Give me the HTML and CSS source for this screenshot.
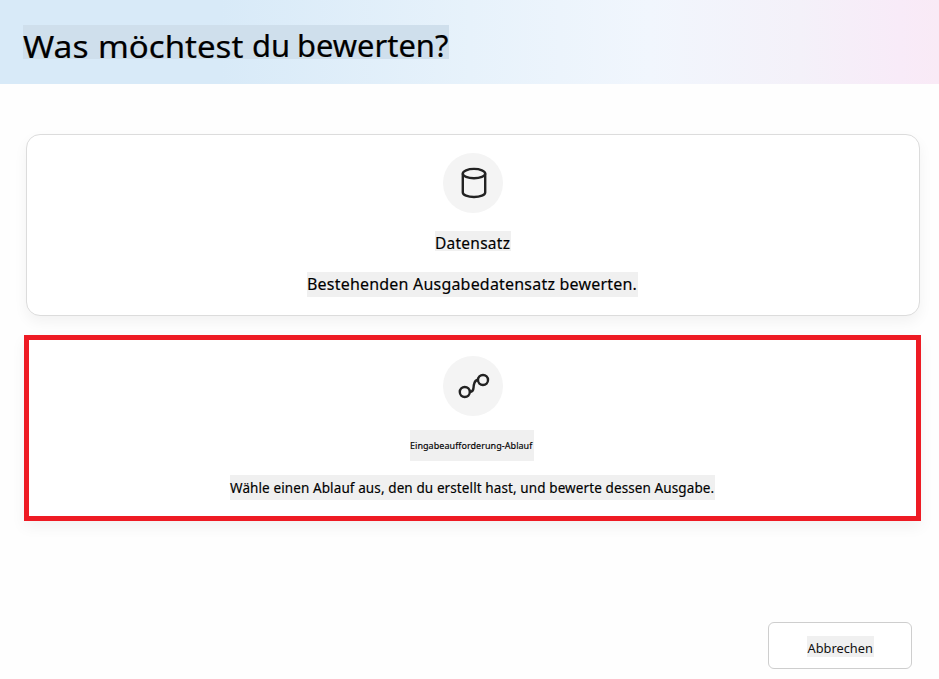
FILE: index.html
```html
<!DOCTYPE html>
<html lang="de">
<head>
<meta charset="utf-8">
<title>Was möchtest du bewerten?</title>
<link rel="stylesheet" href="styles.css">
</head>
<body>
<header class="header"><h1 class="title"><span class="wide">Was</span> <span class="medium">möchtest</span> <span class="tight">du</span> <span class="tight">bewerten?</span></h1></header>
<main class="options">
  <section class="card">
    <div class="icon">
      <svg width="60" height="60" viewBox="0 0 60 60"><ellipse cx="31" cy="20.6" rx="11.2" ry="4.7"/><path d="M19.8 20.6V39.4C19.8 42 24.8 44 31 44s11.2-2 11.2-4.6V20.6"/></svg>
    </div>
    <h2 class="label name">Datensatz</h2>
    <p class="label description">Bestehenden Ausgabedatensatz bewerten.</p>
  </section>
  <section class="card selected">
    <div class="icon">
      <svg width="60" height="60" viewBox="0 0 60 60"><circle cx="21.8" cy="36" r="5"/><circle cx="40" cy="24" r="5"/><path d="M26.8 36C31.8 36 30 31 31 28.5 31.5 26 32 24 35 24"/></svg>
    </div>
    <h2 class="label flow-name">Eingabeaufforderung-Ablauf</h2>
    <p class="label flow-description">Wähle einen Ablauf aus, den du erstellt hast, und bewerte dessen Ausgabe.</p>
  </section>
</main>
<footer class="footer"><button class="cancel"><span class="label cancel-text">Abbrechen</span></button></footer>
</body>
</html>
```
FILE: styles.css
```css
* { box-sizing: border-box; }
body {
  margin: 0;
  height: 679px;
  overflow: hidden;
  display: flex;
  flex-direction: column;
  background: #fefefe;
  color: #000;
  font-family: "Noto Sans", sans-serif;
}
.header {
  height: 84px;
  padding: 25px 23px;
  background: linear-gradient(90deg, #d8eaf8 0, #d8eaf8 220px, #e7f2fb 470px, #f1f6fd 650px, #f4f1f9 800px, #f8ebf8 900px, #f9eaf6 100%);
}
.title {
  margin: 0;
  width: 426px;
  height: 34px;
  display: grid;
  grid-template-columns: 74.5px 154px 45px 1fr;
  background: #cfdfec;
  font-size: 30px;
  font-weight: 400;
  line-height: 42px;
  white-space: nowrap;
  -webkit-text-stroke: .2px #000;
}
.title span { transform-origin: left; }
.wide { transform: translateY(1px) scaleX(1.12); }
.medium { transform: translateY(1px) scaleX(1.1); }
.tight { transform: scaleX(1.03); }
.options {
  padding: 50px 18px 0 24px;
  display: flex;
  flex-direction: column;
  gap: 19px;
}
.card {
  height: 182px;
  margin: 0 1px 0 2px;
  padding-top: 18px;
  border: 1px solid #dcdcdc;
  border-radius: 14px;
  background: #fff;
  box-shadow: 0 6px 14px rgba(0, 0, 0, .05);
  display: flex;
  flex-direction: column;
  align-items: center;
}
.selected {
  height: 186px;
  margin: 0;
  padding-top: 16px;
  border: 5px solid #ee1b24;
  border-radius: 0;
}
.icon {
  width: 60px;
  height: 60px;
  flex: none;
  border-radius: 50%;
  background: #f4f4f4;
}
.icon svg {
  display: block;
  fill: none;
  stroke: #222;
  stroke-width: 2.4;
}
.label {
  margin: 0;
  background: #f0f0f0;
  font-weight: 400;
  white-space: nowrap;
  -webkit-text-stroke: .15px #000;
}
.name { width: 76px; height: 20px; margin-top: 18px; font-size: 15.5px; line-height: 24px; letter-spacing: .25px; }
.description { width: 331px; height: 25px; margin: 21px 1px 0 0; font-size: 16px; line-height: 25px; letter-spacing: .2px; }
.flow-name { width: 124px; height: 31px; margin: 14px 1px 0 0; font-size: 9px; line-height: 31px; letter-spacing: .05px; }
.flow-description { width: 485px; height: 25px; margin-top: 14px; font-size: 13.5px; line-height: 26px; letter-spacing: .105px; }
.footer {
  padding: 101px 27px 0;
  display: flex;
  justify-content: flex-end;
}
.cancel {
  width: 144px;
  height: 47px;
  padding: 1px 0 0;
  border: 1px solid #cecece;
  border-radius: 6px;
  background: #fff;
  display: flex;
  align-items: center;
  justify-content: center;
  font-family: inherit;
  color: #111;
}
.cancel-text { width: 67px; height: 21px; padding-left: 1px; font-size: 12.8px; line-height: 24px; text-align: left; -webkit-text-stroke: 0; }
```
